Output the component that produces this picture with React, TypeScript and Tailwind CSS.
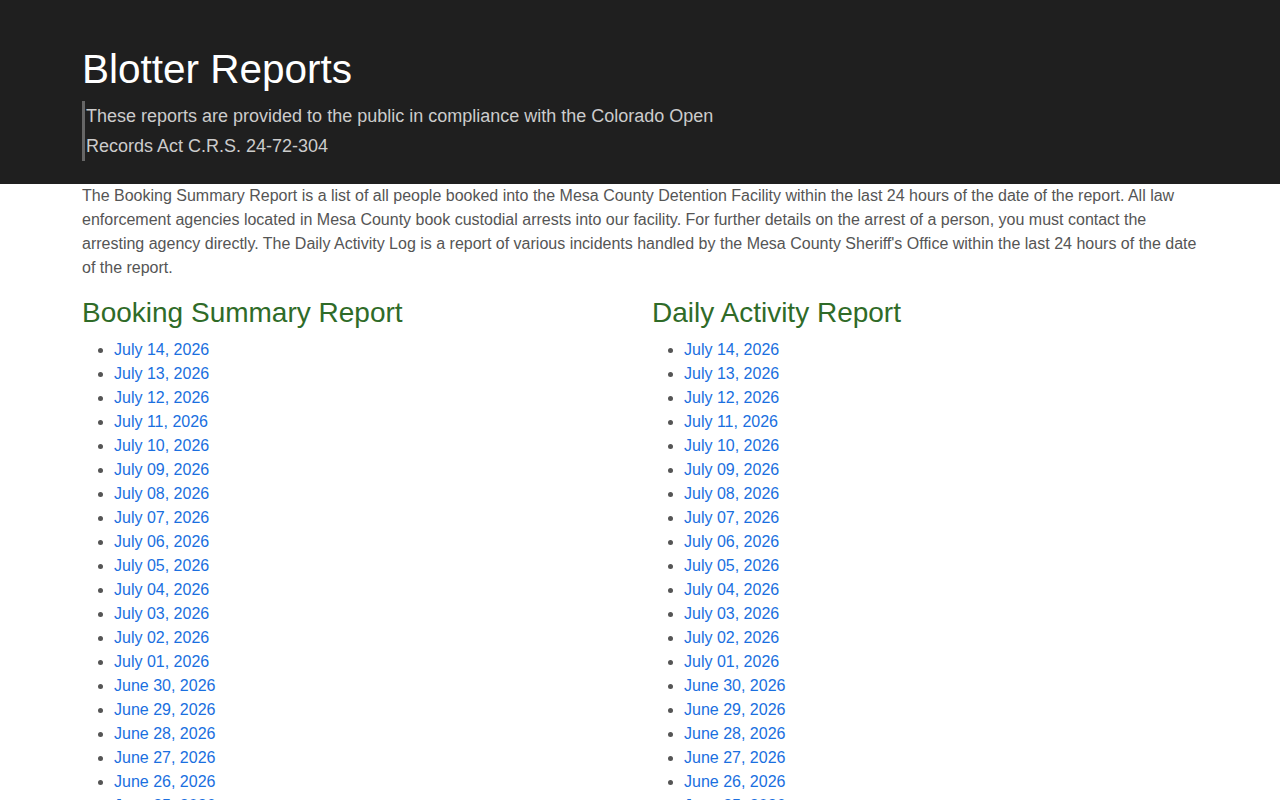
import React from "react";

const MONTHS = [
  "January", "February", "March", "April", "May", "June",
  "July", "August", "September", "October", "November", "December",
];

// last 30 days ending at the newest report date
function reportDates(count: number) {
  const out: string[] = [];
  const start = new Date(2026, 6, 14);
  for (let i = 0; i < count; i++) {
    const d = new Date(start);
    d.setDate(start.getDate() - i);
    const day = String(d.getDate()).padStart(2, "0");
    out.push(`${MONTHS[d.getMonth()]} ${day}, ${d.getFullYear()}`);
  }
  return out;
}

function ReportList({ title, dates }: { title: string; dates: string[] }) {
  return (
    <div className="px-[12px]">
      <h3 className="mt-[16px] mb-[8px] text-[28px] leading-[34px] text-[#2f6b28]">{title}</h3>
      <ul className="list-disc pl-[32px] marker:text-[#555]">
        {dates.map((d) => (
          <li key={d} className="leading-[24px]">
            <a href="#" className="text-[#1a6fe0] hover:underline">
              {d}
            </a>
          </li>
        ))}
      </ul>
    </div>
  );
}

export default function App() {
  const dates = reportDates(30);
  return (
    <div className="min-h-screen bg-white font-['Liberation_Sans',Arial,sans-serif] text-[16px] text-[#555]">
      <header className="bg-[#1f1f1f] pt-[45px] pb-[23px]">
        <div className="mx-auto w-[1116px]">
          <h1 className="text-[40.5px] leading-[48px] text-white">Blotter Reports</h1>
          <blockquote className="mt-[8px] w-[650px] border-l-[3px] border-[#666] pl-[1px] text-[18px] leading-[30px] text-[#ccc]">
            These reports are provided to the public in compliance with the Colorado Open Records Act C.R.S. 24-72-304
          </blockquote>
        </div>
      </header>

      <main className="mx-auto w-[1116px]">
        <p className="leading-[24px]">
          The Booking Summary Report is a list of all people booked into the Mesa County Detention Facility within
          the last 24 hours of the date of the report. All law enforcement agencies located in Mesa County book
          custodial arrests into our facility. For further details on the arrest of a person, you must contact the
          arresting agency directly. The Daily Activity Log is a report of various incidents handled by the Mesa
          County Sheriff's Office within the last 24 hours of the date of the report.
        </p>
        <div className="-mx-[12px] grid grid-cols-2">
          <ReportList title="Booking Summary Report" dates={dates} />
          <ReportList title="Daily Activity Report" dates={dates} />
        </div>
      </main>
    </div>
  );
}
